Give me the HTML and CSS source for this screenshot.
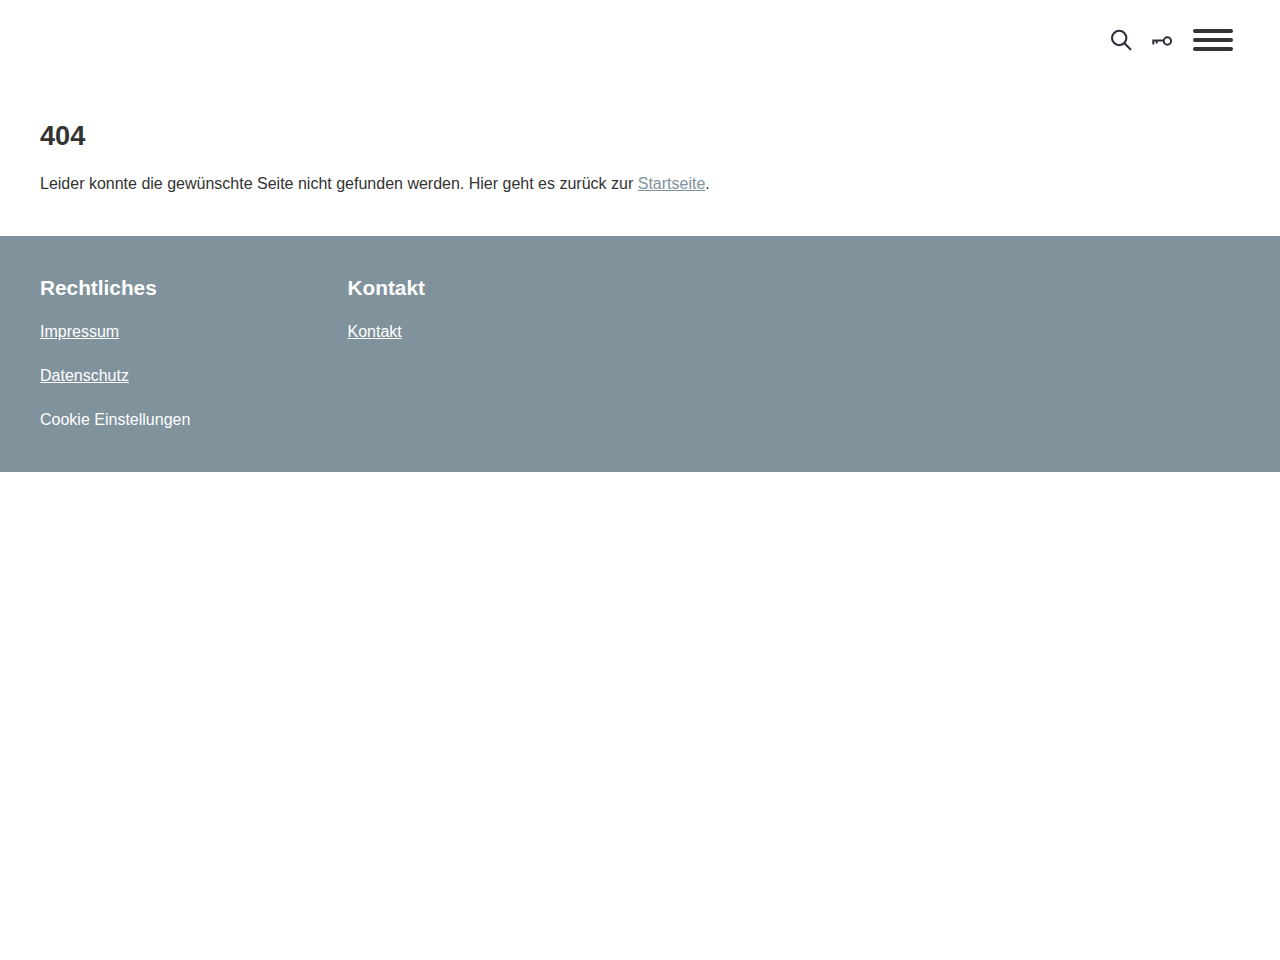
FILE: index.html
```html
<!DOCTYPE html>
<html lang="de">
<head>
<meta charset="utf-8">
<title>404</title>
<link rel="stylesheet" href="styles.css">
</head>
<body>
<header class="header">
  <a class="icon-link" href="#" aria-label="Suche">
    <svg class="icon" width="22" height="22" viewBox="0 0 22 22" fill="none" stroke="#2b2f38" stroke-width="2.1" stroke-linecap="round"><circle cx="9.2" cy="9" r="7.2"/><path d="M14.5 14.3 20.4 20.3"/></svg>
  </a>
  <a class="icon-link" href="#" aria-label="Login">
    <svg class="icon" width="20" height="12" viewBox="0 0 20 12" fill="none" stroke="#2b2f38" stroke-width="2"><circle cx="15.4" cy="7" r="3.7"/><path d="M11.5 6.6H.3M1.3 6.6V10.4M4.7 6.6V9.4" /></svg>
  </a>
  <button class="burger" aria-label="Menü"><span></span><span></span><span></span></button>
</header>
<main class="main">
  <h1>404</h1>
  <p>Leider konnte die gewünschte Seite nicht gefunden werden. Hier geht es zurück zur <a href="#">Startseite</a>.</p>
</main>
<footer class="footer">
  <section class="col col-legal">
    <h2>Rechtliches</h2>
    <ul>
      <li><a href="#">Impressum</a></li>
      <li><a href="#">Datenschutz</a></li>
      <li><span>Cookie Einstellungen</span></li>
    </ul>
  </section>
  <section class="col">
    <h2>Kontakt</h2>
    <ul>
      <li><a href="#">Kontakt</a></li>
    </ul>
  </section>
</footer>
</body>
</html>
```
FILE: styles.css
```css
* { box-sizing: border-box; }
html, body { margin: 0; padding: 0; background: #fff; }
body { font-family: "Liberation Sans", Arial, sans-serif; font-size: 16px; line-height: 24px; color: #333; }
.header { display: flex; justify-content: flex-end; align-items: center; height: 80px; padding-right: 47px; gap: 20px; }
.icon-link { display: flex; align-items: center; }
.icon { display: block; }
.burger { display: flex; flex-direction: column; gap: 5px; width: 40px; margin-left: 1px; padding: 0; border: 0; background: none; }
.burger span { display: block; height: 4px; border-radius: 2px; background: #333; }
.main { padding: 40px 40px 40px; }
.main h1 { margin: 0 0 20px; font-size: 27.2px; line-height: 32px; font-weight: 700; }
.main p { margin: 0; }
.main a { color: #80929c; }
.footer { display: flex; background: #80929c; color: #fff; padding: 40px; height: 236px; }
.col-legal { width: 307.5px; }
.col h2 { margin: 0 0 20px; font-size: 20.8px; line-height: 24px; font-weight: 700; }
.col ul { margin: 0; padding: 0; list-style: none; display: flex; flex-direction: column; gap: 20px; }
.col a { color: #fff; }
```
